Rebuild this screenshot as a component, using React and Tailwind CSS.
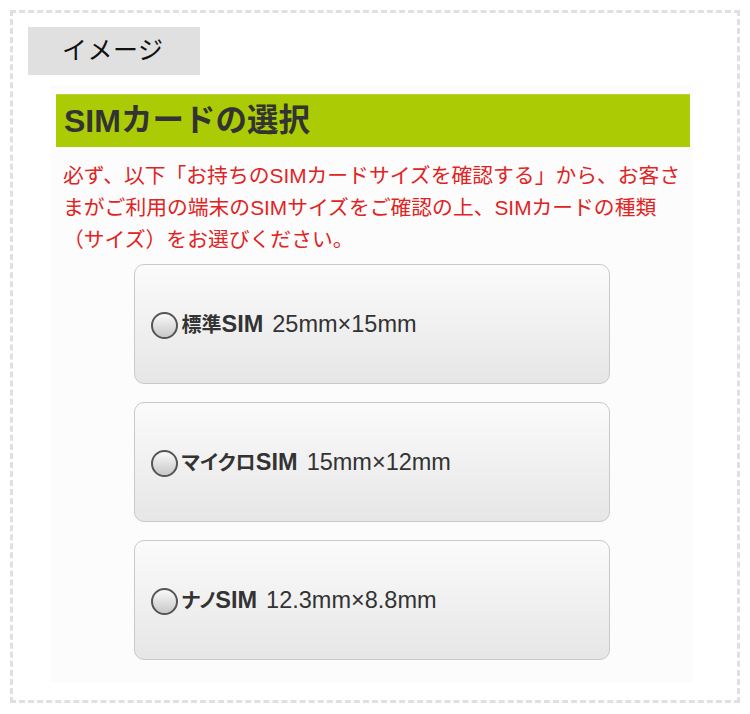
const sizes = [
  { name: '標準', label: 'SIM', dim: '25mm×15mm' },
  { name: 'マイクロ', label: 'SIM', dim: '15mm×12mm' },
  { name: 'ナノ', label: 'SIM', dim: '12.3mm×8.8mm' },
];

function SizeOption({ name, label, dim }) {
  return (
    <button className="flex h-[120px] w-[476px] items-center rounded-[10px] border border-[#c9c9c9] bg-gradient-to-b from-[#fbfbfb] to-[#e6e6e6] pl-[16px] pt-[2px] text-left text-[#333]">
      <span className="h-[27px] w-[27px] shrink-0 rounded-full border-2 border-[#555] bg-gradient-to-b from-[#fafafa] to-[#c8c8c8]" />
      <span className="ml-[4px] font-bold text-[20px] [font-feature-settings:'palt']">{name}</span>
      <span className="font-bold text-[23.5px]">{label}</span>
      <span className="ml-[9px] text-[23.5px]">{dim}</span>
    </button>
  );
}

export default function App() {
  return (
    <div className="bg-white p-[10px] font-['Liberation_Sans','Noto_Sans_CJK_JP',sans-serif]">
      <div className="h-[693px] w-[730px] border-[3px] border-dashed border-[#e0e0e0]">
        <div className="ml-[15px] mt-[14px] flex h-[48px] w-[172px] items-center bg-[#e0e0e0] pl-[34px] text-[25px] tracking-[0.5px] text-[#111]">
          イメージ
        </div>
        <div className="ml-[37px] mt-[10px] h-[597px] w-[643px] bg-[#fcfcfc] pt-[9px]">
          <div className="ml-[6px] flex h-[53px] w-[634px] items-center border-t border-[#b8d43a] bg-[#abcc04] pl-[8px] text-[#333]">
            <span className="font-bold text-[32px]">SIM</span>
            <span className="font-bold text-[31.5px]">カードの選択</span>
          </div>
          <p className="ml-[13px] mt-[13px] text-[20.8px] leading-[32px] text-[#e02424]">
            必ず、以下「お持ちのSIMカードサイズを確認する」から、お客さ
            <br />
            まがご利用の端末のSIMサイズをご確認の上、SIMカードの種類
            <br />
            （サイズ）をお選びください。
          </p>
          <div className="mt-[8px] flex flex-col items-center gap-[18px]">
            {sizes.map((s) => (
              <SizeOption key={s.dim} {...s} />
            ))}
          </div>
        </div>
      </div>
    </div>
  );
}
